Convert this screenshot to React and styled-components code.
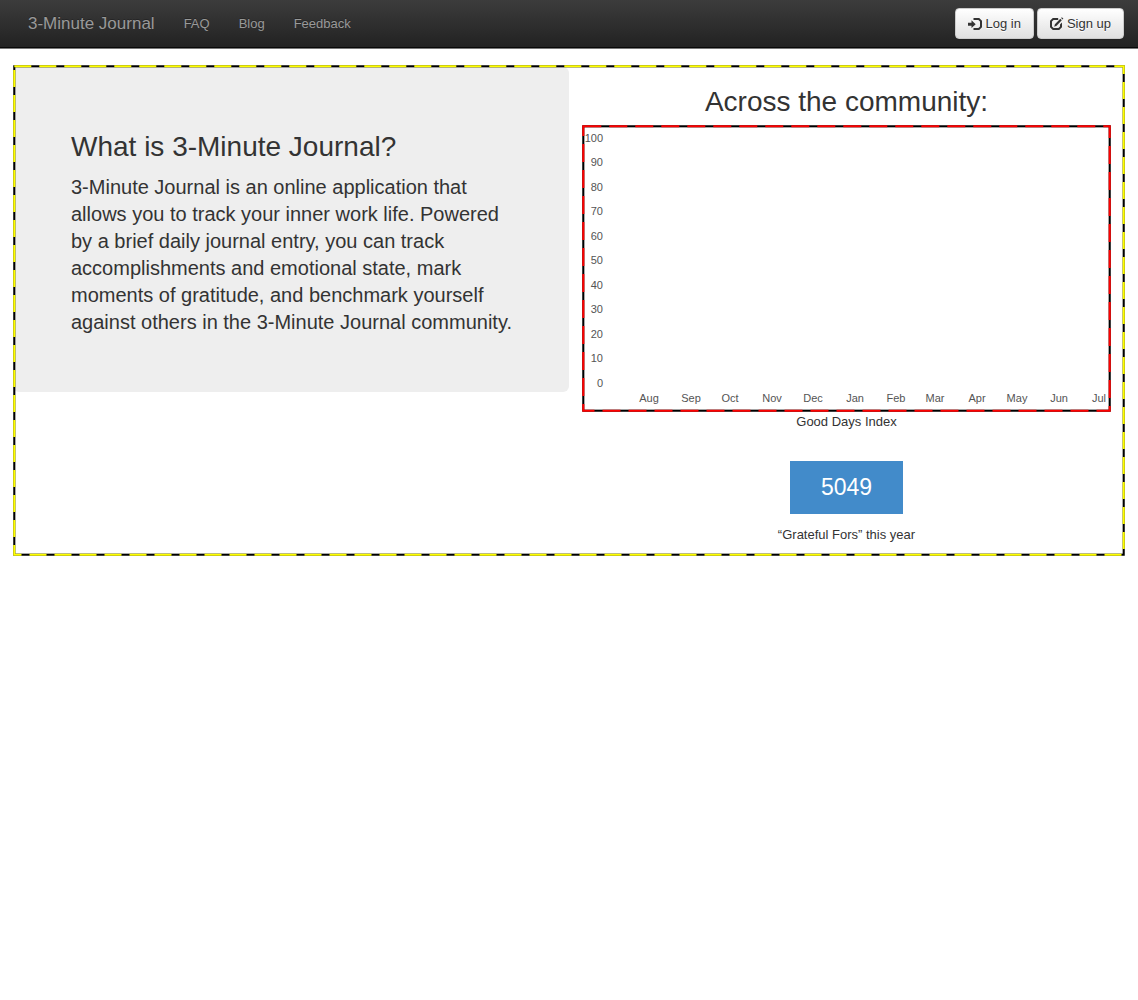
import React from "react";
import styled, { createGlobalStyle } from "styled-components";

const GlobalStyle = createGlobalStyle`
  *, *::before, *::after { box-sizing: border-box; }
  body {
    margin: 0;
    background: #fff;
    color: #333;
    font-family: "Liberation Sans", Arial, sans-serif;
    font-size: 13px;
    line-height: 19px;
  }
`;

const Navbar = styled.nav`
  display: flex;
  align-items: center;
  gap: 1px;
  min-height: 48px;
  padding: 0 14px;
  background: linear-gradient(to bottom, #3c3c3c 0%, #222 100%);
  border-bottom: 1px solid #080808;
  box-shadow: 0 1px 0 #777;
`;

const Brand = styled.a`
  padding: 0 14px;
  color: #999;
  font-size: 17px;
  text-decoration: none;
  text-shadow: 0 -1px 0 rgba(0, 0, 0, 0.25);
`;

const NavLinks = styled.ul`
  display: flex;
  gap: 1px;
  margin: 0;
  padding: 0;
  list-style: none;
`;

const NavLink = styled.a`
  display: block;
  padding: 0 14px;
  color: #999;
  text-decoration: none;
  text-shadow: 0 -1px 0 rgba(0, 0, 0, 0.25);
`;

const Actions = styled.div`
  display: flex;
  gap: 3px;
  margin-left: auto;
`;

const Button = styled.button`
  display: flex;
  align-items: center;
  gap: 3px;
  height: 31px;
  padding: 0 12px;
  border: 1px solid #ccc;
  border-radius: 4px;
  background: linear-gradient(to bottom, #fff 0%, #e0e0e0 100%);
  box-shadow: inset 0 1px 0 rgba(255, 255, 255, 0.15), 0 1px 1px rgba(0, 0, 0, 0.08);
  color: #333;
  font: inherit;
  text-shadow: 0 1px 0 #fff;
  cursor: pointer;
`;

const Icon = styled.svg`
  width: 14px;
  height: 14px;
  fill: currentColor;
`;

const Frame = styled.main`
  position: relative;
  display: grid;
  grid-template-columns: 1fr 1fr;
  align-items: start;
  margin: 17px 13px;
`;

const Outline = styled.svg`
  position: absolute;
  inset: 0;
  width: 100%;
  height: 100%;
  pointer-events: none;

  rect {
    width: calc(100% - 2.6px);
    height: calc(100% - 2.6px);
    fill: none;
    stroke: #000;
    stroke-width: 2.1px;
  }

  rect + rect {
    stroke: ${(p) => p.$color};
    stroke-dasharray: ${(p) => p.$dash};
  }
`;

const Intro = styled.section`
  padding: 64px 56px 56px 58px;
  margin-top: 2px;
  border-radius: 6px;
  background: #eee;
`;

const Heading = styled.h2`
  margin: 0;
  font-size: 28px;
  font-weight: 400;
  line-height: 32px;
`;

const Lead = styled.p`
  margin: 11px 0 0;
  font-size: 20px;
  line-height: 27px;
`;

const Community = styled.section`
  display: flex;
  flex-direction: column;
  align-items: center;
  padding: 21px 14px 12px 13px;
`;

const ChartBox = styled.div`
  position: relative;
  align-self: stretch;
  height: 287px;
  margin-top: 7px;
`;

const Chart = styled.svg`
  display: block;
  width: 100%;
  height: 100%;

  text {
    fill: #545454;
    font-size: 11px;
    text-anchor: middle;
  }

  text.value { text-anchor: end; }
`;

const Caption = styled.p`
  margin: 0;
`;

const Total = styled.strong`
  margin: 30px 0 11px;
  padding: 13px 31px;
  background: #428bca;
  color: #fff;
  font-size: 23px;
  font-weight: 400;
  line-height: 27px;
`;

const VALUES = [100, 90, 80, 70, 60, 50, 40, 30, 20, 10, 0];
const CHART_WIDTH = 529;
const MONTHS = [
  ["Aug", 67], ["Sep", 109], ["Oct", 148], ["Nov", 190], ["Dec", 231], ["Jan", 273],
  ["Feb", 314], ["Mar", 353], ["Apr", 395], ["May", 435], ["Jun", 477], ["Jul", 517],
];

function DashedOutline({ color, dash }) {
  return (
    <Outline $color={color} $dash={dash} aria-hidden="true">
      <rect x="1.3" y="1.3" />
      <rect x="1.3" y="1.3" />
    </Outline>
  );
}

function LogInIcon() {
  return (
    <Icon viewBox="0 0 14 14" aria-hidden="true">
      <path d="M0 5.700h3.500V3.300L7.700 7.200l-4.200 3.900V8.700H0z" />
      <path d="M5.500 1h5.700L14 3.800v6.400L11.200 13H5.500v-2h4.900l1.600-1.600V4.600L10.400 3H5.500z" />
    </Icon>
  );
}

function EditIcon() {
  return (
    <Icon viewBox="0 0 14 14" aria-hidden="true">
      <path d="M2.800 1h5.400v2H3.600L2 4.600v4.800L3.600 11h4.800L10 9.400V7.600l2-2v4.600L9.200 13H2.800L0 10.200V3.800z" />
      <path d="M10.300 1.800l1.500 1.500L6.600 8.800l-2.400.9.700-2.500zM11.100 1l.8-.8 1.500 1.500-.8.8z" />
    </Icon>
  );
}

export default function App() {
  return (
    <>
      <GlobalStyle />
      <Navbar>
        <Brand href="#">3-Minute Journal</Brand>
        <NavLinks>
          {["FAQ", "Blog", "Feedback"].map((label) => (
            <li key={label}>
              <NavLink href={`#${label.toLowerCase()}`}>{label}</NavLink>
            </li>
          ))}
        </NavLinks>
        <Actions>
          <Button type="button"><LogInIcon />Log in</Button>
          <Button type="button"><EditIcon />Sign up</Button>
        </Actions>
      </Navbar>
      <Frame>
        <Intro>
          <Heading>What is 3-Minute Journal?</Heading>
          <Lead>
            3-Minute Journal is an online application that allows you to track your inner work
            life. Powered by a brief daily journal entry, you can track accomplishments and
            emotional state, mark moments of gratitude, and benchmark yourself against others in
            the 3-Minute Journal community.
          </Lead>
        </Intro>
        <Community>
          <Heading>Across the community:</Heading>
          <ChartBox>
            <Chart role="img" aria-label="Good Days Index by month">
              {VALUES.map((value, i) => (
                <text key={value} className="value" x="21" y={Math.floor(17 + i * 24.5)}>{value}</text>
              ))}
              {MONTHS.map(([month, x]) => (
                <text key={month} x={`${(x / CHART_WIDTH) * 100}%`} y="277">{month}</text>
              ))}
            </Chart>
            <DashedOutline color="#f00" dash="18 8" />
          </ChartBox>
          <Caption>Good Days Index</Caption>
          <Total>5049</Total>
          <Caption>“Grateful Fors” this year</Caption>
        </Community>
        <DashedOutline color="#ff0" dash="17 8" />
      </Frame>
    </>
  );
}
